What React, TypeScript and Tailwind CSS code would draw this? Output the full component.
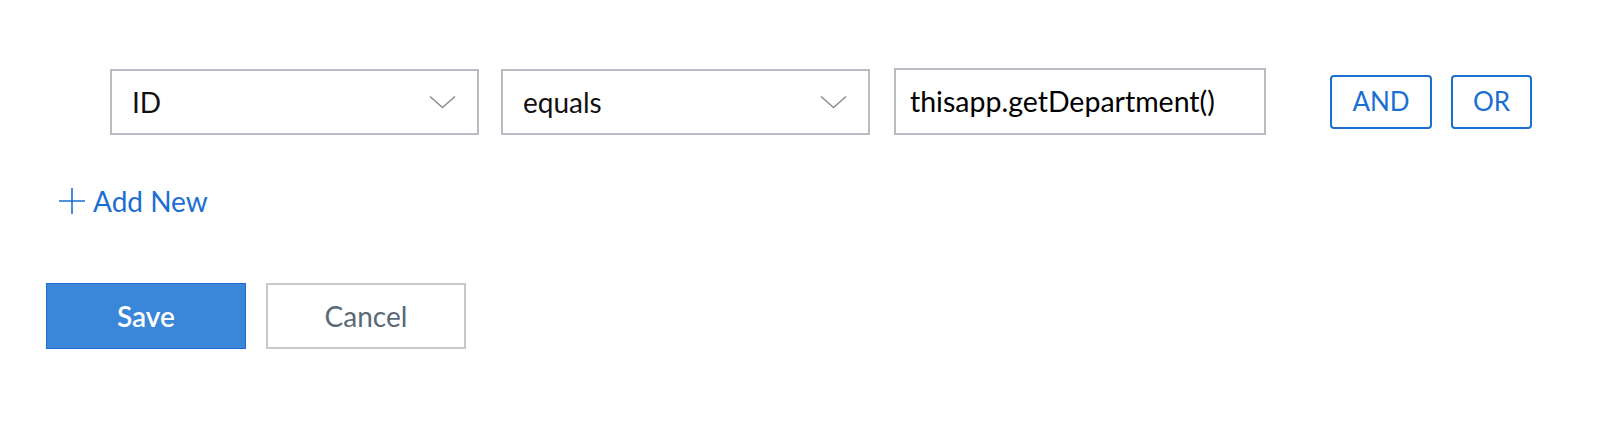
import { useState } from 'react'

function Chevron() {
  return (
    <svg width="27" height="14" viewBox="0 0 27 14" fill="none" className="shrink-0">
      <path d="M1 1.5 L13.5 12.5 L26 1.5" stroke="#8a8f96" strokeWidth="1.6" />
    </svg>
  )
}

function SelectBox({ value }: { value: string }) {
  return (
    <div className="w-[369px] h-[66px] border-2 border-[#b9bcc3] bg-white flex items-center justify-between pl-[20px] pr-[21px]">
      <span className="text-[28px] text-[#111]">{value}</span>
      <Chevron />
    </div>
  )
}

export default function App() {
  const [value] = useState('thisapp.getDepartment()')

  return (
    <div className="w-[1612px] h-[428px] bg-white pl-[46px] pt-[68px]" style={{ fontFamily: "Lato, 'Open Sans', sans-serif" }}>
      {/* criteria row */}
      <div className="flex items-center ml-[64px]">
        <SelectBox value="ID" />
        <div className="ml-[22px]">
          <SelectBox value="equals" />
        </div>
        <div className="ml-[24px] w-[372px] h-[67px] border-2 border-[#b9bcc3] bg-white flex items-center pl-[14px]">
          <span className="text-[28.5px] text-black">{value}</span>
        </div>
        <button className="ml-[64px] w-[102px] h-[54px] border-2 border-[#1a6fd1] rounded-[4px] text-[#1a6fd1] text-[26px]">AND</button>
        <button className="ml-[19px] w-[81px] h-[54px] border-2 border-[#1a6fd1] rounded-[4px] text-[#1a6fd1] text-[26px]">OR</button>
      </div>

      {/* add new */}
      <button className="mt-[45px] ml-[13px] flex items-center gap-[8px] text-[#1a6fd1]">
        <svg width="26" height="26" viewBox="0 0 26 26" fill="none">
          <path d="M13 0 V26 M0 13 H26" stroke="#1a6fd1" strokeWidth="1.6" />
        </svg>
        <span className="text-[28px] leading-[42px]">Add New</span>
      </button>

      {/* actions */}
      <div className="flex gap-[20px] mt-[61px]">
        <button className="w-[200px] h-[66px] bg-[#3a87d9] border border-[#1a6fd1] text-white text-[28px] font-semibold">Save</button>
        <button className="w-[200px] h-[66px] bg-white border-2 border-[#c8c8c8] text-[#5b6976] text-[28px]">Cancel</button>
      </div>
    </div>
  )
}
